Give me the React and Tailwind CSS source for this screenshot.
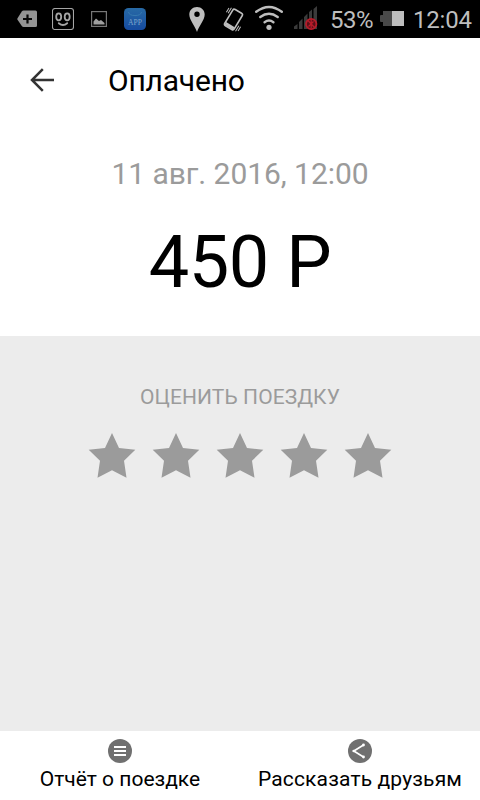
import React from 'react';

const STAR = '24,0 31,15 47.3,16.8 36,27.8 38.5,44.7 24,37.2 9.5,44.7 12,27.8 0.7,16.8 17,15';

function StatusIcons() {
  return (
    <div className="flex h-full items-center pl-[17px]">
      <svg className="h-[18px] w-5" viewBox="0 0 20 18">
        <path d="M6.5 .5H18.5Q20 .5 20 2V15.500Q20 17 18.500 17H6.500Q5.500 17 4.800 16L.5 9.800Q0 9 .5 8.200L4.800 1.500Q5.500.5 6.500.5Z" fill="#949494" />
        <path d="M10.500 4.500V13.500M6 9H15" stroke="#080808" strokeWidth="2.200" />
      </svg>
      <svg className="ml-[15px] h-[22px] w-[22px]" viewBox="0 0 22 22" fill="none" stroke="#a5a5a5">
        <rect x=".5" y=".5" width="21" height="21" rx="2.500" strokeWidth="1.100" />
        <ellipse cx="6.700" cy="8.800" rx="2.500" ry="3.500" strokeWidth="1.800" />
        <ellipse cx="15.200" cy="8.800" rx="2.500" ry="3.500" strokeWidth="1.800" />
        <path d="M6.800 15.200Q11 18.800 15.200 15.200" strokeWidth="1.800" strokeLinecap="round" />
      </svg>
      <svg className="ml-[17px] h-4 w-4" viewBox="0 0 16 16">
        <rect x=".6" y=".6" width="14.800" height="14.800" fill="none" stroke="#777" strokeWidth="1.200" />
        <path d="M2.500 13.500V10.500L5 7.500L8 10L10 9L13.500 12V13.500Z" fill="#a0a0a0" />
      </svg>
      <svg className="ml-[17px] h-[22px] w-[22px]" viewBox="0 0 22 22">
        <defs>
          <linearGradient id="appFill" x1="0" y1="0" x2="0" y2="1">
            <stop offset="0" stopColor="#286aa5" />
            <stop offset="1" stopColor="#164ba0" />
          </linearGradient>
        </defs>
        <rect width="22" height="22" rx="4.500" fill="url(#appFill)" />
        <path d="M4.500 4Q5 7.500 11 7.500T17.500 4" fill="none" stroke="#377ab0" />
        <text x="11" y="17" textAnchor="middle" fontSize="7.500" fontFamily="Liberation Serif, serif" fill="#7da5cc">APP</text>
      </svg>
    </div>
  );
}

function SystemIcons() {
  return (
    <div className="flex h-full items-center pr-[9px] text-[#bebebe]">
      <svg className="h-[38px] w-4" viewBox="0 0 16 38">
        <path fillRule="evenodd" d="M8 7C3.500 7 .3 10.300 .3 14.500C.3 20 6 26 8 32C10 26 15.700 20 15.700 14.500C15.700 10.300 12.500 7 8 7ZM8 11.500A2.700 2.700 0 1 1 8 16.900A2.700 2.700 0 1 1 8 11.500Z" fill="currentColor" />
      </svg>
      <svg className="ml-[18px] h-[38px] w-[22px]" viewBox="0 0 22 38" fill="none" stroke="currentColor">
        <g transform="rotate(31 10.500 19.500)">
          <rect x="5" y="10" width="11" height="19" rx="1.800" strokeWidth="1.600" />
          <path d="M5.500 27H15.500" strokeWidth="3" />
          <path d="M2.700 10.500V17M.7 12V17M18.300 22V28.500M20.300 22V27" strokeWidth="1" />
        </g>
      </svg>
      <svg className="ml-[10px] h-[38px] w-7" viewBox="0 0 28 38" fill="none" stroke="currentColor" strokeWidth="2.400" strokeLinecap="round">
        <path d="M1.200 11.800Q14 2 26.800 11.800M5.300 17Q14 10.600 22.700 17M9.600 22.200Q14 19 18.400 22.200" />
        <circle cx="14" cy="27.300" r="2.600" fill="currentColor" stroke="none" />
      </svg>
      <svg className="ml-[10px] h-[38px] w-[25px]" viewBox="0 0 25 38">
        <path d="M1 29V26.500L4.500 24V29ZM6 29V22L9.500 18.500V29ZM11 29V17L14.500 13.500V29ZM16 29V12L19 9.500V29ZM20.500 29V9L24 6V29Z" fill="#3b3b3b" />
        <circle cx="18.200" cy="24" r="5.200" fill="#5b1119" stroke="#b71c2a" strokeWidth="1.800" />
        <path d="M15 20.500L21.500 27.500M18.200 19V28M15.500 26.500L20.500 21.500" stroke="#b71c2a" strokeWidth="1.200" />
      </svg>
      <span className="ml-[12px] mt-0.5 w-[43px] whitespace-nowrap text-2xl tracking-[-0.5px]">53%</span>
      <svg className="ml-[7px] h-[38px] w-6" viewBox="0 0 24 38">
        <path d="M3 11H12V26H3V22H1Q0 22 0 21V16Q0 15 1 15H3Z" fill="#494949" />
        <path d="M12 11H24V26H12Z" fill="currentColor" />
      </svg>
      <span className="ml-[9px] mt-0.5 w-[58px] whitespace-nowrap text-2xl tracking-[-0.2px]">12:04</span>
    </div>
  );
}

function Header() {
  return (
    <header className="flex h-[84px] items-center">
      <svg className="ml-[30px] h-6 w-6" viewBox="0 0 24 24" fill="none" stroke="#333" strokeWidth="2.500">
        <path d="M24 12H2M12.800 1.200L2 12L12.800 22.800" />
      </svg>
      <h1 className="ml-[54px] mt-0.5 text-[30px] leading-none tracking-[-0.2px] text-black">Оплачено</h1>
    </header>
  );
}

function Rating() {
  return (
    <section className="flex flex-1 flex-col items-center bg-[#ececec] pt-[49px]">
      <p className="text-[21px] leading-6 tracking-[0.07px] text-[#9b9b9b]">ОЦЕНИТЬ ПОЕЗДКУ</p>
      <div className="mt-6 flex gap-4">
        {[1, 2, 3, 4, 5].map((n) => (
          <svg key={n} className="h-[45px] w-12" viewBox="0 0 48 45">
            <polygon points={STAR} fill="#9b9b9b" />
          </svg>
        ))}
      </div>
    </section>
  );
}

function BottomBar() {
  return (
    <footer className="grid h-[69px] grid-cols-2 bg-white text-[21px] text-black">
      <button className="flex flex-col items-center pt-2">
        <svg className="h-6 w-6" viewBox="0 0 24 24">
          <circle cx="12" cy="12" r="12" fill="#707070" />
          <path d="M6 8H18M6 12H18M6 16H18" stroke="#fff" strokeWidth="2" />
        </svg>
        <span className="mt-1 whitespace-nowrap leading-6">Отчёт о поездке</span>
      </button>
      <button className="flex flex-col items-center pt-2">
        <svg className="h-6 w-6" viewBox="0 0 24 24">
          <circle cx="12" cy="12" r="12" fill="#707070" />
          <path d="M15.500 6L5.800 12L15.500 18" fill="none" stroke="#fff" strokeWidth="1.700" />
          <g fill="#fff">
            <circle cx="15.500" cy="6" r="1.400" />
            <circle cx="5.800" cy="12" r="1.300" />
            <circle cx="15.500" cy="18" r="1.400" />
          </g>
        </svg>
        <span className="mt-1 whitespace-nowrap leading-6 tracking-[0.15px]">Рассказать друзьям</span>
      </button>
    </footer>
  );
}

export default function App() {
  return (
    <div className="flex h-[800px] w-[480px] flex-col overflow-hidden bg-white font-[Roboto,sans-serif]">
      <div className="flex h-[38px] shrink-0 justify-between bg-black">
        <StatusIcons />
        <SystemIcons />
      </div>
      <Header />
      <section className="flex h-[214px] flex-col items-center pt-[34px]">
        <p className="text-[30px] leading-[36px] tracking-[-0.05px] text-[#9b9b9b]">11 авг. 2016, 12:00</p>
        <p className="mt-[29px] text-[72px] leading-[84px] tracking-[-0.4px] text-black">450 Р</p>
      </section>
      <Rating />
      <BottomBar />
    </div>
  );
}
